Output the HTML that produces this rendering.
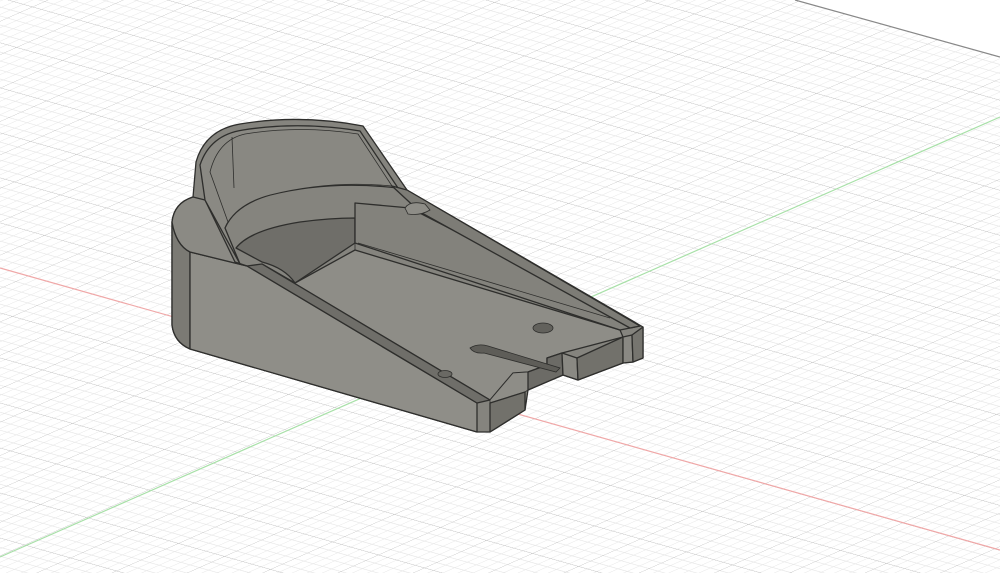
<!DOCTYPE html>
<html><head><meta charset="utf-8"><style>html,body{margin:0;padding:0;background:#fff;overflow:hidden}svg{display:block}</style></head>
<body>
<svg width="1000" height="573" viewBox="0 0 1000 573" xmlns="http://www.w3.org/2000/svg">
<defs>
<pattern id="g" width="100" height="100" patternUnits="userSpaceOnUse" patternTransform="matrix(0.46 0.13 0.62 -0.275 396 380)">
<g stroke="#e4e4e4" stroke-width="1.4" fill="none">
<line x1="20" y1="0" x2="20" y2="100"/><line x1="40" y1="0" x2="40" y2="100"/><line x1="60" y1="0" x2="60" y2="100"/><line x1="80" y1="0" x2="80" y2="100"/>
<line x1="0" y1="20" x2="100" y2="20"/><line x1="0" y1="40" x2="100" y2="40"/><line x1="0" y1="60" x2="100" y2="60"/><line x1="0" y1="80" x2="100" y2="80"/>
</g>
<g stroke="#b8b8b8" stroke-width="2" fill="none"><line x1="0" y1="0" x2="0" y2="100"/><line x1="0" y1="0" x2="100" y2="0"/></g>
</pattern>
<clipPath id="c"><polygon points="0,0 795,0 1000,57 1000,573 0,573"/></clipPath>
</defs>
<rect width="1000" height="573" fill="#fff"/>
<rect width="1000" height="573" fill="url(#g)" clip-path="url(#c)"/>
<line x1="795" y1="0" x2="1000" y2="57" stroke="#888" stroke-width="1.2"/>
<line x1="0" y1="268" x2="1000" y2="550" stroke="#f0a8a8" stroke-width="1.2"/>
<line x1="1000" y1="117" x2="0" y2="557" stroke="#a8e0a8" stroke-width="1.2"/>

<g stroke="#2e2e2c" stroke-width="1.3" stroke-linejoin="round">
<path d="M196,162 Q205,130 240,124 Q300,114 363,126 L407,190 L643,327 L643,358 L633,362 L623,363 L578,380 L563,375 L528,390 L525,410 L490,432 L477,432 L190,349 Q174,342 172,325 L172,222 Q174,203 193,197 Z" fill="#85847e"/>
<path d="M172,222 L172,325 Q174,342 190,349 L190,252 Q176,245 172,222 Z" fill="#7b7a74"/>
<path d="M190,252 L247,266 L477,403 L477,432 L190,349 Z" fill="#8f8e88"/>
<path d="M172,222 Q174,203 193,197 L205,200 L235,262 L247,266 L190,252 Q176,245 172,222 Z" fill="#8b8a84"/>
<path d="M200,165 Q210,135 243,130 Q300,121 360,131 L398,188 Q330,180 270,195 Q235,205 225,228 L240,264 L205,200 Z" fill="#8a8983"/>
<path d="M210,172 Q218,140 245,134 Q300,125 358,134 L392,186 Q330,180 270,195 Q240,203 228,222 Z" fill="#898882" stroke-width="0.8"/>
<line x1="232" y1="137" x2="234" y2="188" stroke-width="0.8"/>
<path d="M236,248 Q250,230 300,222 Q330,218 355,218 L355,243 L295,283 Q285,268 262,262 Z" fill="#6f6e69"/>
<path d="M262,264 L295,283 L355,250 L620,330 L623,337 L562,353 L547,358 L547,365 L528,372 L513,373 L490,400 Z" fill="#8e8d87"/>
<path d="M355,203 L410,208 L640,326 L620,330 L355,243 Z" fill="#83827c"/>
<path d="M392,186 L407,190 L640,326 L630,328 L420,212 Z" fill="#7d7c76"/>
<path d="M247,266 L262,264 L490,400 L477,403 Z" fill="#6f6e69"/>
<path d="M490,400 L513,373 L528,372 L528,390 L525,392 L490,403 Z" fill="#8e8d87" stroke-width="0.8"/>
<path d="M525,392 L525,410 L490,432 L490,403 Z" fill="#72716b"/>
<path d="M528,372 L547,365 L547,358 L562,353 L563,375 L528,390 Z" fill="#6c6b66"/>
<path d="M562,353 L577,358 L578,380 L563,375 Z" fill="#8a8983"/>
<path d="M577,358 L623,337 L623,363 L578,380 Z" fill="#72716b"/>
<path d="M623,337 L632,335 L633,362 L623,363 Z" fill="#8a8983"/>
<path d="M632,335 L643,327 L643,358 L633,362 Z" fill="#76756f"/>
</g>
<path d="M470,348 Q478,343 488,346 L560,368 L556,372 L484,353 Q474,354 470,348 Z" fill="#5e5d58" stroke="#2e2e2c" stroke-width="0.8"/>
<ellipse cx="543" cy="328" rx="10" ry="5" fill="#62615c" stroke="#2e2e2c" stroke-width="0.8"/>
<ellipse cx="445" cy="374" rx="7" ry="3.5" fill="#6a6964" stroke="#2e2e2c" stroke-width="0.8"/>
<path d="M405,208 Q410,200 425,204 L430,210 Q420,216 408,214 Z" fill="#8e8d87" stroke="#2e2e2c" stroke-width="0.8"/>
<line x1="355" y1="218" x2="355" y2="250" stroke="#2e2e2c" stroke-width="0.8"/>
<line x1="358" y1="243" x2="610" y2="318" stroke="#2e2e2c" stroke-width="0.8"/>
</svg>
</body></html>
